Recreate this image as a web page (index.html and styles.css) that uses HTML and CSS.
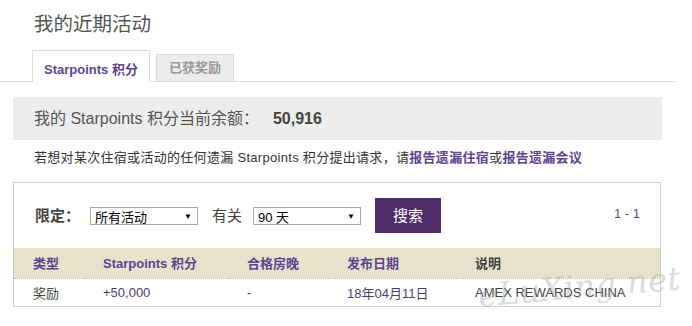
FILE: index.html
```html
<!DOCTYPE html>
<html lang="zh-CN">
<head>
<meta charset="utf-8">
<title>我的近期活动</title>
<link rel="stylesheet" href="styles.css">
</head>
<body>
<div class="page">
  <h1 class="title">我的近期活动</h1>
  <div class="tabs">
    <div class="tab active">Starpoints 积分</div>
    <div class="tab">已获奖励</div>
  </div>
  <div class="balance">我的 Starpoints 积分当前余额：<b class="amount">50,916</b></div>
  <p class="note">若想对某次住宿或活动的任何遗漏 Starpoints 积分提出请求，请<a class="link">报告遗漏住宿</a>或<a class="link">报告遗漏会议</a></p>
  <div class="panel">
    <div class="filters">
      <span class="label bold">限定：</span>
      <span class="select"><span>所有活动</span><span class="arrow">▼</span></span>
      <span class="label">有关</span>
      <span class="select"><span>90 天</span><span class="arrow">▼</span></span>
      <span class="button">搜索</span>
      <span class="pager">1 - 1</span>
    </div>
    <table class="grid">
      <colgroup>
        <col class="c1"><col class="c2"><col class="c3"><col class="c4"><col>
      </colgroup>
      <thead>
        <tr><th>类型</th><th>Starpoints 积分</th><th>合格房晚</th><th>发布日期</th><th class="dark">说明</th></tr>
      </thead>
      <tbody>
        <tr><td>奖励</td><td>+50,000</td><td>-</td><td>18年04月11日</td><td>AMEX REWARDS CHINA</td></tr>
      </tbody>
    </table>
  </div>
  <div class="watermark">eLuXing.net</div>
</div>
</body>
</html>
```

FILE: styles.css
```css
* { box-sizing: border-box; }
html, body { margin: 0; padding: 0; background: #fff; }
body {
  font-family: "Liberation Sans", Arial, "Noto Sans CJK SC", sans-serif;
  color: #444;
  width: 692px;
  height: 326px;
  overflow: hidden;
}
.page { position: relative; }
.title {
  margin: 0;
  padding: 12px 0 0 34px;
  height: 50px;
  font-size: 19.5px;
  font-weight: normal;
  color: #555;
  line-height: 24px;
}
.tabs {
  display: flex;
  align-items: flex-end;
  gap: 6px;
  width: 675px;
  height: 32px;
  padding-left: 32px;
  border-bottom: 1px solid #dcdcdc;
}
.tab {
  height: 27px;
  padding: 0 12px;
  background: #ececec;
  border: 1px solid #dcdcdc;
  border-bottom: none;
  font-size: 13px;
  font-weight: bold;
  color: #999;
  line-height: 26px;
}
.tab.active {
  height: 32px;
  background: #fff;
  color: #5d4590;
  padding: 0 11px;
  margin-bottom: -1px;
  line-height: 38px;
  width: 118px;
}
.balance {
  margin: 15px 0 0 13px;
  width: 649px;
  height: 43px;
  background: #ececec;
  padding-left: 21px;
  font-size: 16px;
  line-height: 43px;
  color: #555;
}
.amount { margin-left: 14px; color: #444; }
.note {
  margin: 0;
  padding: 10px 0 0 34px;
  height: 42px;
  font-size: 13px;
  letter-spacing: 0.3px;
  line-height: 16px;
  color: #333;
}
.link { color: #5d4590; font-weight: bold; }
.panel {
  margin-left: 13px;
  width: 648px;
  height: 125px;
  border: 1px solid #cfcfcf;
}
.filters {
  display: flex;
  align-items: flex-start;
  height: 65px;
  padding: 15px 20px 0 21px;
  position: relative;
}
.label {
  font-size: 15px;
  color: #444;
  line-height: 18px;
  margin-top: 9px;
}
.label.bold { font-weight: bold; width: 55px; }
.select {
  display: flex;
  justify-content: space-between;
  align-items: center;
  width: 108px;
  height: 18px;
  margin-top: 9px;
  border: 1px solid #a9a9a9;
  padding: 0 5px 0 4px;
  font-size: 13px;
  color: #000;
}
.select + .label { margin-left: 14px; width: 41px; }
.arrow { font-size: 8px; }
.button {
  margin-left: 14px;
  width: 66px;
  height: 35px;
  background: #4f2d68;
  color: #fff;
  font-size: 15px;
  line-height: 35px;
  text-align: center;
}
.pager {
  margin-left: auto;
  margin-top: 8px;
  font-size: 13px;
  color: #5d4590;
}
.grid {
  width: 100%;
  border-collapse: collapse;
  table-layout: fixed;
}
.c1 { width: 70px; }
.c2 { width: 144px; }
.c3 { width: 100px; }
.c4 { width: 128px; }
.grid th {
  background: #e8e2cc;
  height: 30px;
  padding: 0 0 0 19px;
  text-align: left;
  font-size: 13px;
  font-weight: bold;
  color: #5d4590;
  border-bottom: 1px dotted #bbb;
}
.grid th.dark { color: #444; }
.grid td {
  height: 28px;
  padding: 0 0 0 19px;
  font-size: 13px;
  color: #444;
  white-space: nowrap;
}
.grid td:nth-child(2), .grid td:nth-child(3), .grid td:nth-child(4) { color: #4a3f6a; }
.watermark {
  position: absolute;
  left: 478px;
  top: 268px;
  font-family: "DejaVu Serif", serif;
  font-style: italic;
  font-size: 32px;
  letter-spacing: 0.5px;
  color: rgba(160, 160, 160, 0.4);
  transform: rotate(-5deg);
  pointer-events: none;
}
```
